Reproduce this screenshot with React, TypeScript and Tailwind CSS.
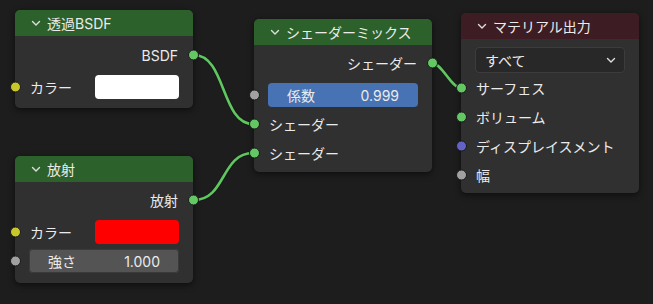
import type { ReactNode } from "react";

const font = { fontFamily: '"Inter", "Noto Sans CJK JP", sans-serif' };

const socketColor = {
  shader: "bg-[#63c763]",
  color: "bg-[#c7c729]",
  float: "bg-[#a1a1a1]",
  vector: "bg-[#6363c7]",
};

type Kind = keyof typeof socketColor;

function Socket({ kind, side }: { kind: Kind; side: "left" | "right" }) {
  return (
    <span
      className={`absolute top-1/2 h-[11px] w-[11px] -translate-y-1/2 rounded-full border border-[#1a1a1a] ${socketColor[kind]} ${
        side === "left" ? "-left-[5.5px]" : "-right-[5.5px]"
      }`}
    />
  );
}

function Chevron({ className = "" }: { className?: string }) {
  return (
    <svg width="10" height="7" viewBox="0 0 10 7" className={className}>
      <path d="M1.5 1.5 L5 5 L8.5 1.5" fill="none" stroke="#dedede" strokeWidth="1.4" strokeLinecap="round" strokeLinejoin="round" />
    </svg>
  );
}

function Node({
  title,
  header,
  className,
  children,
}: {
  title: string;
  header: string;
  className: string;
  children: ReactNode;
}) {
  return (
    <div
      className={`absolute w-[178px] rounded-[5px] bg-[#303030] shadow-[0_2px_6px_rgba(0,0,0,0.55)] ${className}`}
    >
      <div className={`flex h-[26px] items-center gap-[6px] rounded-t-[5px] pl-[16px] text-[14px] text-[#ebebeb] ${header}`}>
        <Chevron />
        <span>{title}</span>
      </div>
      {children}
    </div>
  );
}

function OutRow({ label, kind }: { label: string; kind: Kind }) {
  return (
    <div className="relative flex h-[24px] items-center justify-end pr-[15px] text-[14px] text-[#ebebeb]">
      {label}
      <Socket kind={kind} side="right" />
    </div>
  );
}

function InRow({ label, kind, children }: { label?: string; kind: Kind; children?: ReactNode }) {
  return (
    <div className="relative flex h-[24px] items-center px-[14px] text-[14px] text-[#ebebeb]">
      {label && <span className="pl-[1px]">{label}</span>}
      {children}
      <Socket kind={kind} side="left" />
    </div>
  );
}

function Field({ label, value, blue }: { label: string; value: string; blue?: boolean }) {
  return (
    <div
      className={`flex h-[24px] flex-1 items-center justify-between rounded-[4px] px-[19px] text-[14px] text-[#ebebeb] ${
        blue ? "bg-[#4772b3]" : "bg-[#545454] shadow-[inset_0_0_0_1px_#3a3a3a]"
      }`}
    >
      <span>{label}</span>
      <span>{value}</span>
    </div>
  );
}

function Wire({ d }: { d: string }) {
  return (
    <g fill="none" strokeLinecap="round">
      <path d={d} stroke="#1a1a1a" strokeWidth="4.5" />
      <path d={d} stroke="#5fc75f" strokeWidth="2.6" />
    </g>
  );
}

export default function App() {
  return (
    <div className="relative h-[304px] w-[653px] overflow-hidden bg-[#1d1d1d]" style={font}>
      <svg className="absolute inset-0" width="653" height="304">
        <Wire d="M194 55 C226 55 221 124 253 124" />
        <Wire d="M194 200 C226 200 221 153 253 153" />
        <Wire d="M432 63 C442 63 451 88 461 88" />
      </svg>

      <Node title="透過BSDF" header="bg-[#2c612c]" className="left-[15px] top-[10px]">
        <div className="flex flex-col pb-[9px] pt-[7px]">
          <OutRow label="BSDF" kind="shader" />
          <div className="mt-[8px]">
            <InRow label="カラー" kind="color">
              <div className="ml-auto h-[24px] w-[84px] rounded-[4px] bg-white" />
            </InRow>
          </div>
        </div>
      </Node>

      <Node title="放射" header="bg-[#2c612c]" className="left-[15px] top-[156px]">
        <div className="flex flex-col gap-[5px] pb-[10px] pt-[6px]">
          <OutRow label="放射" kind="shader" />
          <div className="mt-[3px]">
            <InRow label="カラー" kind="color">
              <div className="ml-auto h-[24px] w-[84px] rounded-[4px] bg-[#ff0000]" />
            </InRow>
          </div>
          <InRow kind="float">
            <Field label="強さ" value="1.000" />
          </InRow>
        </div>
      </Node>

      <Node title="シェーダーミックス" header="bg-[#2c612c]" className="left-[254px] top-[19px]">
        <div className="flex flex-col gap-[5px] pb-[7px] pt-[6px]">
          <OutRow label="シェーダー" kind="shader" />
          <div className="mt-[3px]">
            <InRow kind="float">
              <Field label="係数" value="0.999" blue />
            </InRow>
          </div>
          <InRow label="シェーダー" kind="shader" />
          <InRow label="シェーダー" kind="shader" />
        </div>
      </Node>

      <Node title="マテリアル出力" header="bg-[#3e1c23]" className="left-[461px] top-[13px]">
        <div className="flex flex-col gap-[5px] pb-[6px] pt-[8px]">
          <div className="px-[14px]">
            <div className="flex h-[26px] items-center justify-between rounded-[4px] border border-[#3c3c3c] bg-[#282828] pl-[9px] pr-[8px] text-[14px] text-[#ebebeb]">
              <span>すべて</span>
              <Chevron />
            </div>
          </div>
          <div className="mt-[-2px]">
            <InRow label="サーフェス" kind="shader" />
          </div>
          <InRow label="ボリューム" kind="shader" />
          <InRow label="ディスプレイスメント" kind="vector" />
          <InRow label="幅" kind="float" />
        </div>
      </Node>
    </div>
  );
}
